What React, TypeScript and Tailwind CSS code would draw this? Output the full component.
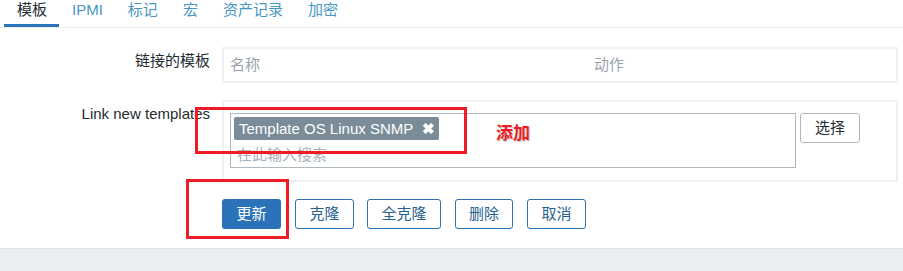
import React from "react";

const tabs = ["模板", "IPMI", "标记", "宏", "资产记录", "加密"];
const actions = [
    { label: "克隆", cls: "ml-[14px] w-[59px]" },
    { label: "全克隆", cls: "ml-[13px] w-[74px]" },
    { label: "删除", cls: "ml-[14px] w-[58px]" },
    { label: "取消", cls: "ml-[14px] w-[59px]" },
];

export default function App() {
    return (
        <div
            className="relative w-[903px] h-[271px] bg-white overflow-hidden text-[15px] text-[#1f2c33]"
            style={{ fontFamily: '"Liberation Sans", "Noto Sans CJK SC", sans-serif' }}
        >
            {/* tabs */}
            <div className="flex h-[28px] pl-[4px] border-b border-[#ebeef0]">
                {tabs.map((t, i) => (
                    <div
                        key={t}
                        className={`pl-[13px] pr-[12px] h-[27px] leading-[19px] ${i === 0 ? "text-[#1f2c33] border-b-[3px] border-[#2a73b8]" : "text-[#4796c4]"}`}
                    >
                        {t}
                    </div>
                ))}
            </div>

            {/* linked templates */}
            <div className="flex mt-[19px]">
                <div className="w-[210px] text-right pt-[4px] leading-[20px]">链接的模板</div>
                <div className="ml-[12px] w-[676px] h-[36px] border-2 border-[#eef1f3] flex items-center text-[#9aa3aa]">
                    <span className="pl-[6px] w-[370px]">名称</span>
                    <span>动作</span>
                </div>
            </div>

            {/* link new templates */}
            <div className="flex mt-[17px]">
                <div className="w-[210px] text-right pt-[4px] leading-[20px]">Link new templates</div>
                <div className="ml-[12px] w-[676px] h-[82px] border-2 border-[#eef1f3] flex items-start pt-[11px] pl-[6px]">
                    <div className="w-[566px] h-[55px] border border-[#aeb8c0] pl-[3px] pt-[3px]">
                        <div className="inline-flex items-center h-[23px] w-[205px] bg-[#7a8c98] text-white rounded-[2px] pl-[5px] leading-none">
                            <span>Template OS Linux SNMP</span>
                            <span className="ml-auto mr-[4px] text-[15px] font-bold">✖</span>
                        </div>
                        <div className="pl-[3px] mt-[4px] text-[#a9b0b5] leading-[20px]">在此输入搜索</div>
                    </div>
                    <button className="ml-[4px] w-[60px] h-[30px] border border-[#aeb8c0] rounded-[3px] text-[#1f2c33] bg-white">
                        选择
                    </button>
                </div>
            </div>

            {/* buttons */}
            <div className="flex pl-[222px] mt-[17px]">
                <button className="w-[59px] h-[30px] rounded-[3px] bg-[#2a73b8] text-white">更新</button>
                {actions.map((a) => (
                    <button
                        key={a.label}
                        className={`${a.cls} h-[30px] rounded-[3px] border border-[#2a73b8] text-[#26618f] bg-white`}
                    >
                        {a.label}
                    </button>
                ))}
            </div>

            {/* footer */}
            <div className="absolute left-0 right-0 top-[248px] bottom-0 bg-[#ebeef0] border-t border-[#dfe4e7]" />

            {/* annotations */}
            <div className="absolute left-[195px] top-[107px] w-[272px] h-[47px] border-[3px] border-[#ee1c25]" />
            <div
                className="absolute left-[496px] top-[123px] text-[#ee1c25] font-bold text-[17px] leading-[22px]"
                style={{ textShadow: "1px 1px 0 #ccc" }}
            >
                添加
            </div>
            <div className="absolute left-[186px] top-[179px] w-[103px] h-[60px] border-[3px] border-[#ee1c25]" />
        </div>
    );
}
